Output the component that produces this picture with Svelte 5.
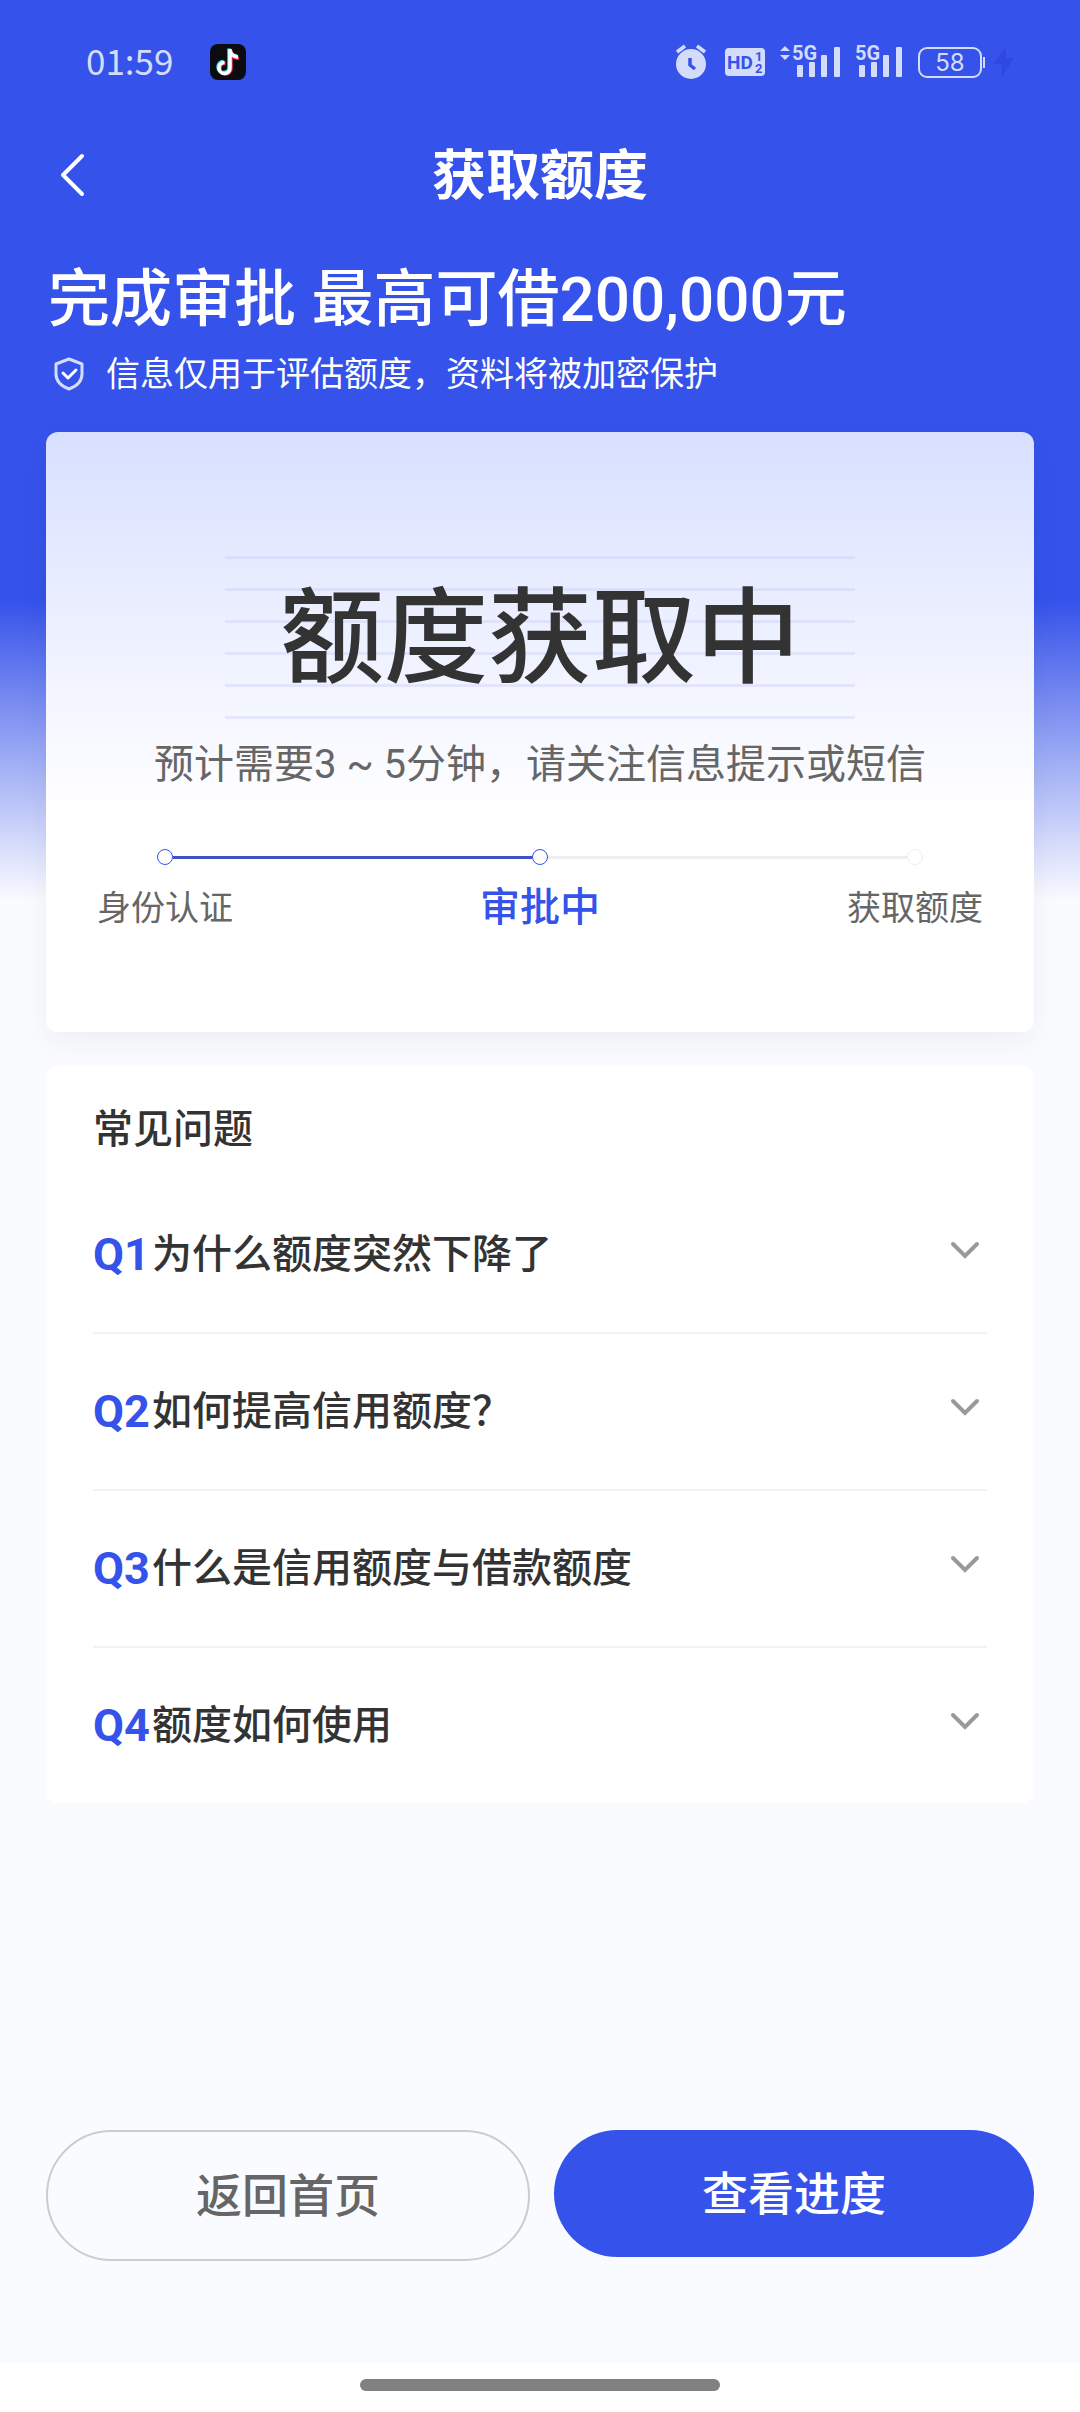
<script>
	let openId = null;

	const steps = [
		{ label: '身份认证', state: 'done' },
		{ label: '审批中', state: 'active' },
		{ label: '获取额度', state: 'todo' }
	];

	const questions = [
		{ id: 1, title: '为什么额度突然下降了' },
		{ id: 2, title: '如何提高信用额度？' },
		{ id: 3, title: '什么是信用额度与借款额度' },
		{ id: 4, title: '额度如何使用' }
	];

	const toggle = (id) => {
		openId = openId === id ? null : id;
	};
</script>

<div class="page">
	<div class="status">
		<span class="time">01:59</span>
		<svg class="tiktok" width="36" height="36" viewBox="0 0 36 36">
			<rect width="36" height="36" rx="8" fill="#0b0b12" />
			<g fill="none" stroke-width="3.500">
				<path stroke="#35e6e0" d="M19 4.500V23a5.500 5.500 0 1 1-5.500-5.500M19 5c.5 4 3.500 6.500 8 7" />
				<path stroke="#f0325a" d="M21 6.500V24.500a5.500 5.500 0 1 1-5.500-5.500M21 7.500c.5 4 3.500 6.500 8 7" />
				<path stroke="#fff" d="M20 5V24a5.500 5.500 0 1 1-5.500-5.500M20 6c.5 4 3.500 6.500 8 7" />
			</g>
		</svg>

		<div class="signals">
			<svg width="32" height="36" viewBox="0 0 32 36">
				<circle cx="16" cy="20" r="15" fill="#d3dcfb" />
				<path d="M2 8l8-6M30 8l-8-6" stroke="#d3dcfb" stroke-width="3.500" fill="none" />
				<path d="M15 14v7l5 4" stroke="#3552ea" stroke-width="3.500" fill="none" />
			</svg>
			<svg class="hd" width="40" height="36" viewBox="0 0 40 36">
				<rect y="4" width="40" height="28" rx="4" fill="#d3dcfb" />
				<g fill="#3552ea" font-family="'Liberation Sans Narrow', Roboto, sans-serif" font-weight="700">
					<text x="2" y="25" font-size="19">HD</text>
					<text x="30" y="17" font-size="13">1</text>
					<text x="30" y="29" font-size="13">2</text>
				</g>
			</svg>
			<svg class="net" width="60" height="48" viewBox="0 -6 60 48">
				<path d="M0 7l5-5 5 5zM0 11l5 5 5-5z" fill="#d3dcfb" />
				<g fill="#d3dcfb">
					<text x="12" y="16" font-size="20" font-family="'Liberation Sans Narrow', Roboto, sans-serif" font-weight="700">5G</text>
					<rect x="17" y="21" width="6" height="12" rx="1" />
					<rect x="29" y="18" width="6" height="15" rx="1" />
					<rect x="41" y="11" width="6" height="22" rx="1" />
					<rect x="54" y="3" width="6" height="30" rx="1" />
				</g>
			</svg>
			<svg class="net" width="47" height="48" viewBox="0 -6 47 48">
				<g fill="#d3dcfb">
					<text x="0" y="16" font-size="20" font-family="'Liberation Sans Narrow', Roboto, sans-serif" font-weight="700">5G</text>
					<rect x="4" y="21" width="6" height="12" rx="1" />
					<rect x="16" y="18" width="6" height="15" rx="1" />
					<rect x="28" y="11" width="6" height="22" rx="1" />
					<rect x="41" y="3" width="6" height="30" rx="1" />
				</g>
			</svg>
			<svg class="battery" width="68" height="36" viewBox="0 0 68 36">
				<rect x="1" y="4" width="62" height="29" rx="8" fill="none" stroke="#d3dcfb" stroke-width="2" />
				<rect x="65" y="13" width="2" height="11" fill="#d3dcfb" />
				<text x="32" y="27" text-anchor="middle" font-size="24" font-family="Inter, sans-serif" fill="#d3dcfb">58</text>
			</svg>
			<svg class="bolt" width="20" height="36" viewBox="0 0 20 36">
				<path d="M12 2L0 20h8L7 34 20 14h-8z" fill="#2f48e0" />
			</svg>
		</div>
	</div>

	<header class="nav">
		<button class="back" aria-label="返回">
			<svg width="28" height="44" viewBox="0 0 28 44">
				<path d="M24 3L5 22l19 19" fill="none" stroke="#fff" stroke-width="4" stroke-linecap="round" stroke-linejoin="round" />
			</svg>
		</button>
		<h1>获取额度</h1>
	</header>

	<section class="intro">
		<h2>完成审批 最高可借200,000元</h2>
		<p>
			<svg width="30" height="34" viewBox="0 0 30 34">
				<path d="M15 2l13 5v10c0 7-5 12-13 15C7 29 2 24 2 17V7z" fill="none" stroke="#d3dcfb" stroke-width="3" stroke-linejoin="round" />
				<path d="M9 16l5 5 8-8" fill="none" stroke="#fff" stroke-width="3" stroke-linecap="round" stroke-linejoin="round" />
			</svg>
			信息仅用于评估额度，资料将被加密保护
		</p>
	</section>

	<main>
		<section class="card progress">
			<div class="lines">
				<strong>额度获取中</strong>
			</div>
			<p class="hint">预计需要3 ~ 5分钟，请关注信息提示或短信</p>
			<div class="track">
				{#each steps as step, i}
					{#if i > 0}
						<span class="bar {step.state}"></span>
					{/if}
					<span class="dot {step.state}"></span>
				{/each}
			</div>
			<ol class="steps">
				{#each steps as step}
					<li class={step.state}>{step.label}</li>
				{/each}
			</ol>
		</section>

		<section class="card faq">
			<h3>常见问题</h3>
			<ul>
				{#each questions as q}
					<li>
						<button on:click={() => toggle(q.id)} aria-expanded={openId === q.id}>
							<span class="no">Q{q.id}</span>
							<span class="title">{q.title}</span>
							<svg width="30" height="28" viewBox="0 0 30 28">
								<path d="M3 3l12 12L27 3" fill="none" stroke="#999" stroke-width="4" stroke-linecap="round" />
							</svg>
						</button>
					</li>
				{/each}
			</ul>
		</section>
	</main>

	<footer>
		<button class="ghost">返回首页</button>
		<button class="primary">查看进度</button>
	</footer>

	<div class="home"><span></span></div>
</div>

<style>
	:global(body) {
		margin: 0;
		background: #fafbff;
	}
	.page {
		min-height: 100vh;
		display: flex;
		flex-direction: column;
		font-family: Roboto, "Noto Sans CJK SC", sans-serif;
		color: #333;
		background: linear-gradient(#3552ea 0, #3552ea 600px, #fafbff 900px);
	}
	h1, h2, h3, p, ul, ol {
		margin: 0;
		padding: 0;
		font-weight: 500;
		list-style: none;
	}
	button {
		border: 0;
		padding: 0;
		background: none;
		font: inherit;
		color: inherit;
	}
	svg {
		display: block;
		flex: none;
	}

	.status {
		display: flex;
		align-items: center;
		height: 124px;
		padding: 0 66px 0 86px;
	}
	.time {
		font-family: "Noto Sans CJK SC", sans-serif;
		font-size: 35px;
		line-height: 48px;
		padding-bottom: 4px;
		color: #d3dcfb;
	}
	.tiktok {
		margin-left: 37px;
	}
	.signals {
		display: flex;
		align-items: center;
		margin-left: auto;
	}
	.hd {
		margin-left: 18px;
	}
	.net {
		margin-left: 15px;
	}
	.battery {
		margin-left: 16px;
	}
	.bolt {
		margin-left: 8px;
	}

	.nav {
		display: grid;
		grid-template-columns: 46px 1fr 46px;
		align-items: center;
		height: 102px;
		padding: 0 46px;
		color: #fff;
	}
	.back {
		padding-left: 12px;
	}
	.nav h1 {
		padding-top: 4px;
		font-size: 54px;
		font-weight: 700;
		line-height: 80px;
		text-align: center;
	}

	.intro {
		padding: 32px 46px 34px;
		color: #fff;
	}
	.intro h2 {
		padding-left: 2px;
		font-size: 62px;
		line-height: 84px;
	}
	.intro p {
		display: flex;
		align-items: center;
		gap: 22px;
		margin-top: 8px;
		padding-left: 8px;
		font-size: 34px;
		font-weight: 400;
		line-height: 48px;
	}

	main {
		display: flex;
		flex-direction: column;
		gap: 34px;
		padding: 0 46px;
	}
	.card {
		border-radius: 12px;
		background: #fff;
	}
	.progress {
		padding: 124px 44px 96px;
		background: linear-gradient(#d8e0ff, #fff 380px);
		box-shadow: 0 10px 30px rgba(0, 0, 0, 0.05);
		text-align: center;
	}
	.lines {
		width: 70%;
		margin: 0 auto;
		background: repeating-linear-gradient(rgba(190, 195, 240, 0.3) 0, rgba(190, 195, 240, 0.3) 3px, transparent 3px, transparent 32px);
	}
	.lines strong {
		display: block;
		padding-top: 4px;
		font-size: 104px;
		font-weight: 500;
		line-height: 160px;
		white-space: nowrap;
	}
	.hint {
		margin-top: 17px;
		font-size: 40px;
		font-weight: 400;
		line-height: 56px;
		color: #666;
	}

	.track {
		display: flex;
		align-items: center;
		margin-top: 56px;
		padding: 0 67px;
	}
	.dot {
		box-sizing: border-box;
		width: 16px;
		height: 16px;
		border: 1px solid #3552ea;
		border-radius: 50%;
		background: #fff;
	}
	.dot.todo {
		border-color: #eee;
	}
	.bar {
		flex: 1;
		height: 3px;
		background: #3f52c8;
	}
	.bar.todo {
		background: #eee;
	}
	.steps {
		display: flex;
		justify-content: space-between;
		margin-top: 15px;
	}
	.steps li {
		width: 150px;
		font-size: 34px;
		font-weight: 400;
		line-height: 56px;
		white-space: nowrap;
		color: #666;
	}
	.steps li.active {
		font-size: 40px;
		font-weight: 500;
		color: #3552ea;
	}

	.faq {
		padding: 34px 47px 0;
	}
	.faq h3 {
		font-size: 40px;
		line-height: 60px;
	}
	.faq ul {
		padding-top: 17px;
	}
	.faq li + li {
		border-top: 2px solid #f2f2f2;
	}
	.faq li button {
		display: flex;
		align-items: center;
		width: 100%;
		height: 155px;
		padding-right: 7px;
		text-align: left;
	}
	.no {
		width: 59px;
		font-size: 45px;
		font-weight: 700;
		color: #3552ea;
	}
	.title {
		flex: 1;
		font-size: 40px;
		font-weight: 500;
		line-height: 60px;
	}

	footer {
		display: flex;
		align-items: flex-start;
		gap: 24px;
		margin-top: auto;
		padding: 60px 46px 102px;
	}
	footer button {
		box-sizing: content-box;
		flex: 1;
		height: 127px;
		border-radius: 66px;
		font-size: 46px;
		font-weight: 500;
		line-height: 60px;
	}
	.ghost {
		border: 2px solid #ccc;
		color: #666;
	}
	.primary {
		background: #3552ea;
		color: #fff;
	}

	.home {
		display: flex;
		justify-content: center;
		padding: 16px 0 21px;
		background: #fff;
	}
	.home span {
		width: 33.333%;
		height: 12px;
		border-radius: 6px;
		background: #808080;
	}
</style>
